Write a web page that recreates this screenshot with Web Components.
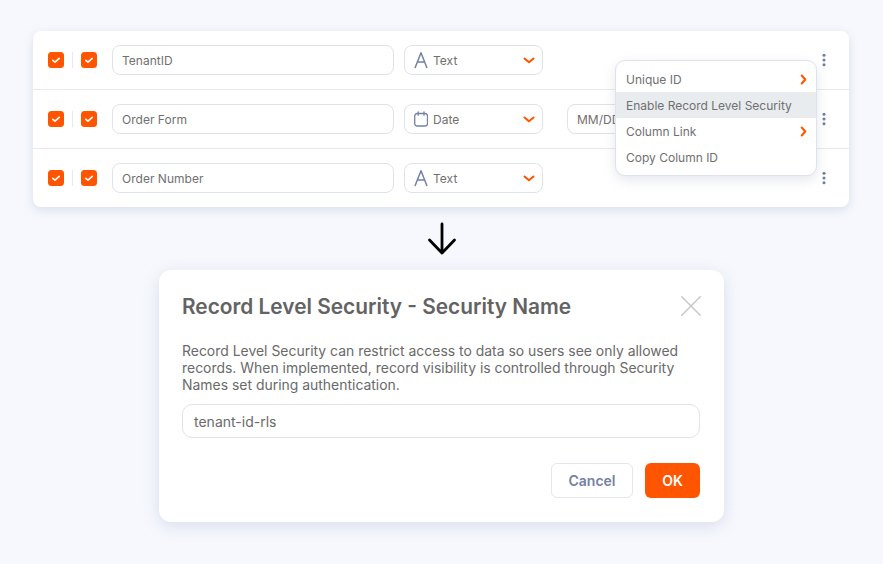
<!DOCTYPE html>
<html><head><meta charset="utf-8">
<style>
html,body{margin:0;padding:0;background:#f6f8fd;}
body{width:883px;height:564px;overflow:hidden;font-family:Inter,"Liberation Sans",sans-serif;color:#666;}
</style></head><body>
<app-page>
  <field-table>
    <field-row name="TenantID" type="text"></field-row>
    <field-row name="Order Form" type="date" format="MM/DD/YYYY"></field-row>
    <field-row name="Order Number" type="text" last></field-row>
    <ctx-menu slot="menu">
      <menu-item arrow>Unique ID</menu-item>
      <menu-item active>Enable Record Level Security</menu-item>
      <menu-item arrow>Column Link</menu-item>
      <menu-item>Copy Column ID</menu-item>
    </ctx-menu>
  </field-table>
  <down-arrow></down-arrow>
  <rls-dialog heading="Record Level Security - Security Name" value="tenant-id-rls">Record Level Security can restrict access to data so users see only allowed records. When implemented, record visibility is controlled through Security Names set during authentication.</rls-dialog>
</app-page>
<script>
const def=(n,html)=>{customElements.define(n,class extends HTMLElement{
  connectedCallback(){ if(this.shadowRoot)return; const r=this.attachShadow({mode:'open'}); r.innerHTML=typeof html==='function'?html(this):html; }
});};
def('app-page',`<style>:host{display:flex;flex-direction:column;align-items:center;padding-top:31px;box-sizing:border-box;height:564px;width:883px}</style><slot></slot>`);
def('field-table',`<style>:host{display:block;position:relative;width:816px;height:176px;margin-right:1px;background:#fff;border-radius:8px;box-shadow:0 3px 10px rgba(120,130,170,.22)}</style><slot></slot><slot name="menu"></slot>`);
const check=`<svg width="16" height="16" viewBox="0 0 16 16"><rect width="16" height="16" rx="3.500" fill="#ff5500"/><path d="M4.800 8.300l2.200 1.900L11.200 6.300" fill="none" stroke="#fff" stroke-width="1.600" stroke-linecap="round" stroke-linejoin="round"/></svg>`;
const aIcon=`<svg width="14" height="18" viewBox="0 0 14 18"><path d="M1.200 16.500L7 1.800l5.800 14.700M3.400 11h7.200" fill="none" stroke="#7581a5" stroke-width="1.500" stroke-linecap="round" stroke-linejoin="round"/></svg>`;
const dIcon=`<svg width="14" height="16" viewBox="0 0 14 16"><rect x=".7" y="2.500" width="12.800" height="12.500" rx="2.500" fill="none" stroke="#7581a5" stroke-width="1.300"/><path d="M4.200 .8v3.400M10 .8v3.400" stroke="#7581a5" stroke-width="1.300" stroke-linecap="round"/></svg>`;
const chev=`<svg width="12" height="7" viewBox="0 0 12 7"><path d="M1.500 1.500L6 5.300l4.500-3.800" fill="none" stroke="#ff5500" stroke-width="2" stroke-linecap="round" stroke-linejoin="round"/></svg>`;
const kebab=`<svg width="4" height="14" viewBox="0 0 4 14"><g fill="#6f7ba1"><circle cx="2" cy="2.200" r="1.500"/><circle cx="2" cy="7" r="1.500"/><circle cx="2" cy="11.800" r="1.500"/></g></svg>`;
def('field-row',h=>{
 const t=h.getAttribute('type'),f=h.getAttribute('format');
 return `<style>
 :host{display:flex;align-items:center;height:59px;padding-left:15px;box-sizing:border-box;border-bottom:1px solid #e7e9ee;position:relative;font:12px Inter,"Liberation Sans",sans-serif;color:#707070;letter-spacing:.02px}
 :host([last]){border-bottom:0;padding-bottom:1px}
 svg{display:block;flex:none}
 .sep{width:1px;height:16px;background:#e7e9ee;margin:0 8px}
 .box{box-sizing:border-box;height:30px;border:1px solid #dfe2e9;border-radius:8px;display:flex;align-items:center;background:#fff}
 .name{width:282px;margin-left:15px;padding-left:9px}
 .type{width:139px;margin-left:10px;padding:0 7px 0 9px;gap:5px}
 .type span{flex:1}
 .fmt{width:120px;margin-left:24px;padding-left:9px;white-space:nowrap;overflow:hidden}
 .k{position:absolute;left:789px;top:22px}
 </style>${check}<div class="sep"></div>${check}
 <div class="box name">${h.getAttribute('name')}</div>
 <div class="box type">${t==='date'?dIcon:aIcon}<span>${t==='date'?'Date':'Text'}</span>${chev}</div>
 ${f?`<div class="box fmt">${f}</div>`:''}
 <div class="k">${kebab}</div>`;
});
def('ctx-menu',`<style>:host{display:block;position:absolute;left:582px;top:29px;width:202px;height:116px;box-sizing:border-box;padding:5px 0;background:#fff;border:1px solid #dfe2e9;border-radius:10px;box-shadow:0 4px 12px rgba(110,120,160,.18);z-index:2}</style><slot></slot>`);
def('menu-item',h=>`<style>
 :host{display:flex;align-items:center;justify-content:space-between;height:26px;padding:0 9px 0 10px;font:12px Inter,"Liberation Sans",sans-serif;color:#707070;box-sizing:border-box}
 :host([active]){background:#e9ecef}
 svg{display:block}
</style><slot></slot>${h.hasAttribute('arrow')?`<svg width="7" height="11" viewBox="0 0 7 11"><path d="M1.700 1.500L5.300 5.500 1.700 9.500" fill="none" stroke="#ff5500" stroke-width="2" stroke-linecap="round" stroke-linejoin="round"/></svg>`:''}`);
def('down-arrow',`<style>:host{display:block;height:63px;width:32px;flex:none}svg{display:block;margin-top:15px}</style><svg width="32" height="34" viewBox="0 0 32 34"><path d="M16 2V31M3.500 18L16 31 28.500 18" fill="none" stroke="#000" stroke-width="2.800" stroke-linecap="round" stroke-linejoin="round"/></svg>`);
def('rls-dialog',h=>`<style>
 :host{display:block;box-sizing:border-box;width:565px;height:252px;background:#fff;border-radius:12px;padding:24px 23px 0;box-shadow:0 4px 16px rgba(120,130,170,.22);position:relative;color:#6a6a6a;font-family:Inter,"Liberation Sans",sans-serif}
 h2{margin:0;font-size:20.850px;line-height:26px;font-weight:600;color:#636363}
 .x{position:absolute;right:23px;top:26px;display:block}
 p{margin:22px 0 0;font-size:13.950px;line-height:17px;width:520px}
 .inp{margin-top:11px;height:34px;box-sizing:border-box;border:1px solid #e0e3ea;border-radius:10px;padding-left:11px;display:flex;align-items:center;font-size:14px;width:518px}
 .btns{display:flex;justify-content:flex-end;gap:12px;margin-top:25px;width:518px}
 .b{height:35px;box-sizing:border-box;border-radius:6px;display:flex;align-items:center;justify-content:center;font-size:14px;font-weight:600}
 .c{width:82px;border:1px solid #e3e6ec;color:#7581a5;background:#fff}
 .o{width:55px;background:#ff5500;color:#fff}
</style><h2>${h.getAttribute('heading')}</h2>
<svg class="x" width="20" height="20" viewBox="0 0 20 20"><path d="M.8 .8L19.200 19.200M19.200 .8L.8 19.200" stroke="#c8c8c8" stroke-width="1.500" stroke-linecap="round"/></svg>
<p><slot></slot></p><div class="inp">${h.getAttribute('value')}</div>
<div class="btns"><div class="b c">Cancel</div><div class="b o">OK</div></div>`);
</script>
</body></html>
